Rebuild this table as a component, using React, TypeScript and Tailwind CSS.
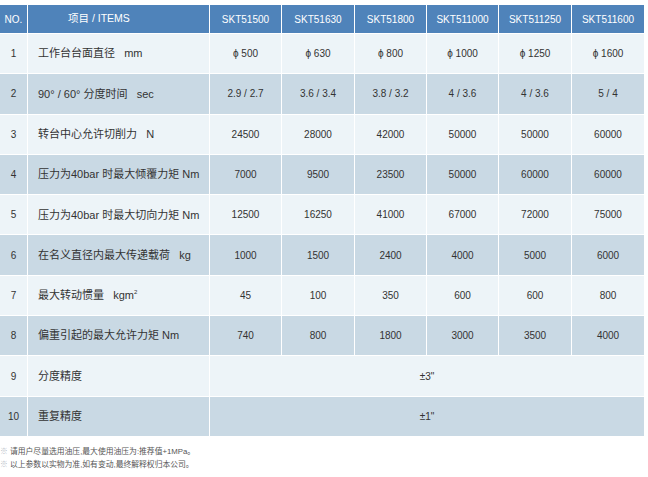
const font = "font-['Liberation_Sans','Noto_Sans_CJK_SC',sans-serif]";

const models = ["SKT51500", "SKT51630", "SKT51800", "SKT511000", "SKT511250", "SKT511600"];

type Row = { no: string; item: React.ReactNode; values?: string[]; merged?: string };

const rows: Row[] = [
  { no: "1", item: <>工作台台面直径&nbsp;&nbsp;&nbsp;mm</>, values: ["ϕ 500", "ϕ 630", "ϕ 800", "ϕ 1000", "ϕ 1250", "ϕ 1600"] },
  { no: "2", item: <>90° / 60° 分度时间&nbsp;&nbsp;&nbsp;sec</>, values: ["2.9 / 2.7", "3.6 / 3.4", "3.8 / 3.2", "4 / 3.6", "4 / 3.6", "5 / 4"] },
  { no: "3", item: <>转台中心允许切削力&nbsp;&nbsp;&nbsp;N</>, values: ["24500", "28000", "42000", "50000", "50000", "60000"] },
  { no: "4", item: <>压力为40bar 时最大倾覆力矩 Nm</>, values: ["7000", "9500", "23500", "50000", "60000", "60000"] },
  { no: "5", item: <>压力为40bar 时最大切向力矩 Nm</>, values: ["12500", "16250", "41000", "67000", "72000", "75000"] },
  { no: "6", item: <>在名义直径内最大传递载荷&nbsp;&nbsp;&nbsp;kg</>, values: ["1000", "1500", "2400", "4000", "5000", "6000"] },
  { no: "7", item: <>最大转动惯量&nbsp;&nbsp;&nbsp;kgm<sup className="text-[6px]">2</sup></>, values: ["45", "100", "350", "600", "600", "800"] },
  { no: "8", item: <>偏重引起的最大允许力矩 Nm</>, values: ["740", "800", "1800", "3000", "3500", "4000"] },
  { no: "9", item: <>分度精度</>, merged: "±3\"" },
  { no: "10", item: <>重复精度</>, merged: "±1\"" },
];

export default function App() {
  return (
    <div className={`w-[648px] h-[477px] bg-white pt-[5px] ${font} text-[#333] text-[10px]`}>
      <div className="grid w-[644px] grid-cols-[27px_181px_71px_72px_71px_71px_72px_72px] grid-rows-[28px_repeat(10,39.3px)] gap-px bg-white">
        <div className="bg-[#4f83ba] text-white flex items-center justify-center">NO.</div>
        <div className="bg-[#4f83ba] text-white flex items-center pl-[40px] text-[10.5px]">项目 / ITEMS</div>
        {models.map((m) => (
          <div key={m} className="bg-[#4f83ba] text-white flex items-center justify-center">
            {m}
          </div>
        ))}
        {rows.map((r, i) => {
          const bg = i % 2 === 0 ? "bg-[#edf4f8]" : "bg-[#c9d9e4]";
          return (
            <div key={r.no} className="contents">
              <div className={`${bg} flex items-center justify-center`}>{r.no}</div>
              <div className={`${bg} flex items-center pl-[10px] text-[11px]`}>{r.item}</div>
              {r.merged ? (
                <div className={`${bg} col-span-6 flex items-center justify-center`}>{r.merged}</div>
              ) : (
                r.values!.map((v, j) => (
                  <div key={j} className={`${bg} flex items-center justify-center`}>
                    {v}
                  </div>
                ))
              )}
            </div>
          );
        })}
      </div>
      <div className="mt-[9px] text-[7.8px] leading-[13px] text-[#555]">
        <p><span className="text-[#b8c0c8]">※</span> 请用户尽量选用油压,最大使用油压为:推荐值+1MPa。</p>
        <p><span className="text-[#b8c0c8]">※</span> 以上参数以实物为准,如有变动,最终解释权归本公司。</p>
      </div>
    </div>
  );
}
